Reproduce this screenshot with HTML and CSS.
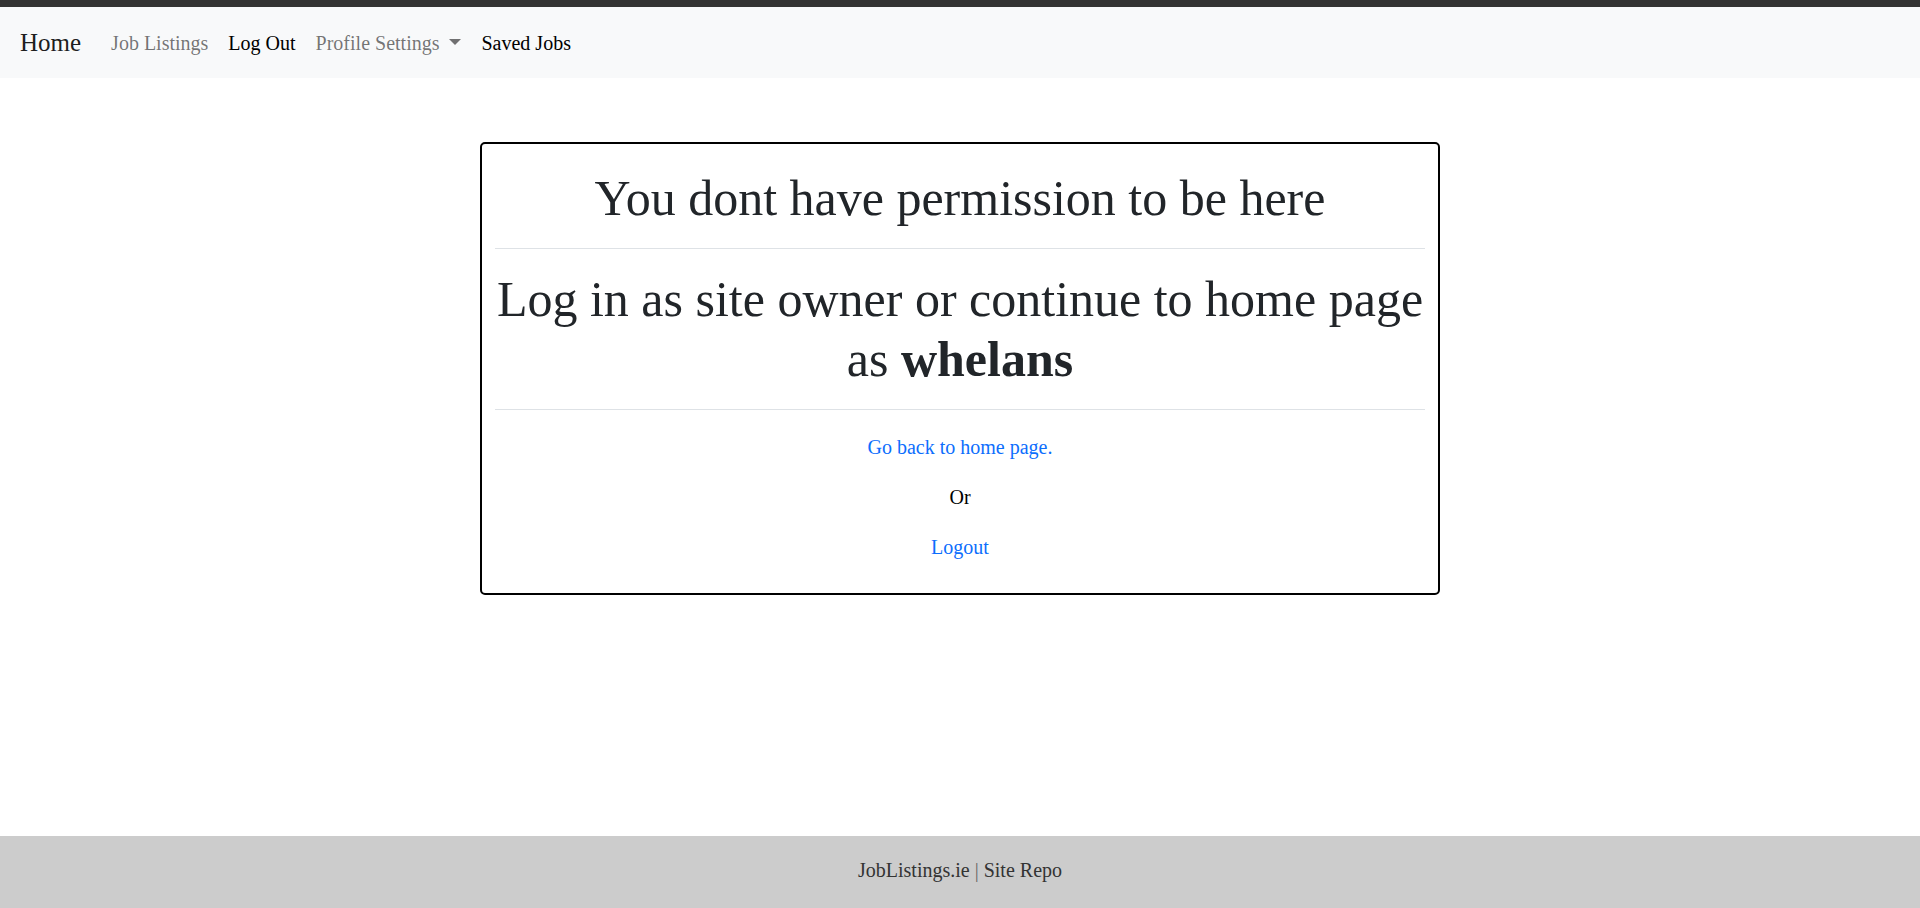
FILE: index.html
```html
<!DOCTYPE html>
<html lang="en">
<head>
<meta charset="utf-8">
<title>Permission denied</title>
<link rel="stylesheet" href="styles.css">
</head>
<body>
<div class="page">
  <nav class="navbar">
    <a class="brand" href="#">Home</a>
    <ul class="nav">
      <li><a class="nav-link muted" href="#">Job Listings</a></li>
      <li><a class="nav-link dark" href="#">Log Out</a></li>
      <li><a class="nav-link muted dropdown" href="#">Profile Settings<span class="caret"></span></a></li>
      <li><a class="nav-link dark" href="#">Saved Jobs</a></li>
    </ul>
  </nav>

  <main class="content">
    <div class="card">
      <h1 class="title">You dont have permission to be here</h1>
      <hr class="rule">
      <h1 class="title">Log in as site owner or continue to home page as <b>whelans</b></h1>
      <hr class="rule rule-last">
      <p class="line"><a class="link" href="#">Go back to home page.</a></p>
      <p class="line plain">Or</p>
      <p class="line"><a class="link" href="#">Logout</a></p>
    </div>
  </main>

  <footer class="footer">
    <span class="foot-text">JobListings.ie <span class="sep">|</span> Site Repo</span>
  </footer>
</div>
</body>
</html>
```

FILE: styles.css
```css
html, body {
  margin: 0;
  padding: 0;
}

body {
  font-family: "Liberation Serif", "Times New Roman", serif;
  font-size: 20px;
  line-height: 1.5;
  color: #212529;
  background: #ffffff;
}

.page {
  min-height: 100vh;
  display: flex;
  flex-direction: column;
}

.navbar {
  border-top: 7px solid #333333;
  background: #f8f9fa;
  box-sizing: border-box;
  height: 78px;
  display: flex;
  align-items: center;
  padding: 0 0 0 20px;
}

.brand {
  font-size: 25px;
  color: rgba(0, 0, 0, 0.9);
  text-decoration: none;
  margin-right: 20px;
  line-height: 1.5;
}

.nav {
  list-style: none;
  margin: 0;
  padding: 0;
  display: flex;
  align-items: center;
}

.nav-link {
  display: block;
  padding: 8px 10px;
  text-decoration: none;
  font-size: 20px;
}

.nav-link.muted {
  color: rgba(0, 0, 0, 0.55);
}

.nav-link.dark {
  color: #000000;
}

.caret {
  display: inline-block;
  margin-left: 10px;
  vertical-align: 5px;
  border-top: 6px solid;
  border-left: 6px solid transparent;
  border-right: 6px solid transparent;
  border-bottom: 0;
}

.content {
  display: flex;
  justify-content: center;
  padding-top: 64px;
}

.card {
  width: 960px;
  box-sizing: border-box;
  border: 2px solid #000000;
  border-radius: 5px;
  padding: 24px 13px 11px;
  text-align: center;
}

.title {
  font-size: 50px;
  font-weight: 400;
  line-height: 1.2;
  margin: 0 0 10px;
  color: #212529;
}

.title b {
  font-weight: 700;
}

.rule {
  margin: 20px 0;
  border: 0;
  border-top: 1px solid #dee2e6;
  height: 0;
}

.rule-last {
  margin-bottom: 22px;
}

.line {
  margin: 0 0 20px;
  font-size: 20px;
  line-height: 1.5;
}

.line.plain {
  color: #000000;
}

.link {
  color: #0d6efd;
  text-decoration: none;
}

.footer {
  margin-top: auto;
  height: 72px;
  box-sizing: border-box;
  padding-bottom: 4px;
  background: #cccccc;
  display: flex;
  align-items: center;
  justify-content: center;
}

.foot-text {
  font-size: 20px;
  color: #333333;
}

.sep {
  color: #666666;
}
```
